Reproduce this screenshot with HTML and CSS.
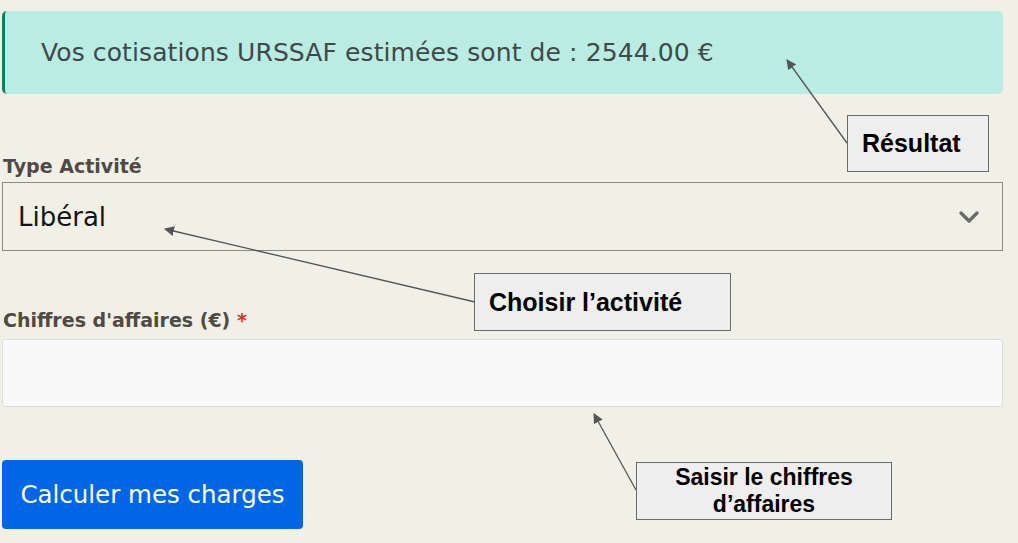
FILE: index.html
```html
<!DOCTYPE html>
<html lang="fr">
<head>
<meta charset="utf-8">
<title>Calcul cotisations URSSAF</title>
<link rel="stylesheet" href="styles.css">
</head>
<body>
<main class="page">
  <div class="alert">Vos cotisations URSSAF estimées sont de : 2544.00 €</div>

  <label class="label label-type">Type Activité</label>
  <div class="select">
    <span class="select-value">Libéral</span>
    <svg class="chevron" width="22" height="14" viewBox="0 0 22 14"><polyline points="3,3 11,11 19,3" fill="none" stroke="#6b6b6b" stroke-width="3.4" stroke-linecap="round" stroke-linejoin="round"/></svg>
  </div>

  <label class="label label-ca">Chiffres d'affaires (€) <span class="req">*</span></label>
  <div class="input"></div>

  <button class="btn">Calculer mes charges</button>

  <svg class="arrows" width="1018" height="543" viewBox="0 0 1018 543">
    <defs>
      <marker id="ah" markerWidth="10" markerHeight="10" refX="9" refY="5" orient="auto" markerUnits="userSpaceOnUse">
        <path d="M0,0 L10,5 L0,10 Z" fill="#555"/>
      </marker>
    </defs>
    <line x1="847" y1="143" x2="787" y2="60" stroke="#555" stroke-width="1.3" marker-end="url(#ah)"/>
    <line x1="475" y1="302" x2="165" y2="229" stroke="#555" stroke-width="1.3" marker-end="url(#ah)"/>
    <line x1="636" y1="490" x2="594" y2="414" stroke="#555" stroke-width="1.3" marker-end="url(#ah)"/>
  </svg>

  <div class="note note-result">Résultat</div>
  <div class="note note-activity">Choisir l’activité</div>
  <div class="note note-ca">Saisir le chiffres<br>d’affaires</div>
</main>
</body>
</html>
```

FILE: styles.css
```css
html, body {
  margin: 0;
  padding: 0;
  background: #f1f0e6;
}
.page {
  position: relative;
  width: 1018px;
  height: 543px;
  padding: 11px 15px 0 2px;
  box-sizing: border-box;
  display: flex;
  flex-direction: column;
  align-items: flex-start;
  font-family: "DejaVu Sans", "Open Sans", sans-serif;
  overflow: hidden;
}
.alert {
  align-self: stretch;
  height: 83px;
  box-sizing: border-box;
  background: #b9ede4;
  border-left: 3px solid #157a60;
  border-radius: 5px;
  padding: 0 0 0 36px;
  display: flex;
  align-items: center;
  color: #404848;
  font-size: 25px;
  letter-spacing: 0.1px;
  font-weight: 400;
}
.label {
  display: block;
  font-weight: 700;
  color: #4f4a45;
  font-size: 19px;
  padding-left: 1px;
}
.label-type {
  margin-top: 61px;
  line-height: 22px;
}
.select {
  align-self: stretch;
  margin-top: 5px;
  height: 69px;
  box-sizing: border-box;
  border: 1.5px solid #8a8a86;
  display: flex;
  align-items: center;
  justify-content: space-between;
  padding: 0 22px 0 15px;
}
.select-value {
  font-size: 26px;
  color: #151515;
}
.chevron {
  display: block;
}
.label-ca {
  margin-top: 58px;
  line-height: 22px;
}
.req {
  color: #e0312f;
}
.input {
  align-self: stretch;
  margin-top: 8px;
  height: 68px;
  box-sizing: border-box;
  background: #f9f9f9;
  border: 1px solid #dcdcdc;
  border-radius: 3px;
}
.btn {
  margin-top: 53px;
  width: 301px;
  height: 69px;
  border: none;
  border-radius: 4px;
  background: #0066e6;
  color: #ffffff;
  font-family: "DejaVu Sans", "Open Sans", sans-serif;
  font-size: 24.5px;
  padding: 0;
  cursor: pointer;
}
.arrows {
  position: absolute;
  left: 0;
  top: 0;
  pointer-events: none;
}
.note {
  position: absolute;
  box-sizing: border-box;
  background: #eeeeee;
  border: 1.5px solid #6a6a6a;
  font-family: "Liberation Sans", Arial, sans-serif;
  font-weight: 700;
  color: #000;
  display: flex;
  align-items: center;
}
.note-result {
  left: 847px;
  top: 115px;
  width: 142px;
  height: 57px;
  font-size: 25px;
  padding-left: 14px;
}
.note-activity {
  left: 474px;
  top: 273px;
  width: 257px;
  height: 58px;
  font-size: 25px;
  padding-left: 14px;
}
.note-ca {
  left: 636px;
  top: 462px;
  width: 256px;
  height: 58px;
  font-size: 23px;
  line-height: 27px;
  justify-content: center;
  text-align: center;
}
```
